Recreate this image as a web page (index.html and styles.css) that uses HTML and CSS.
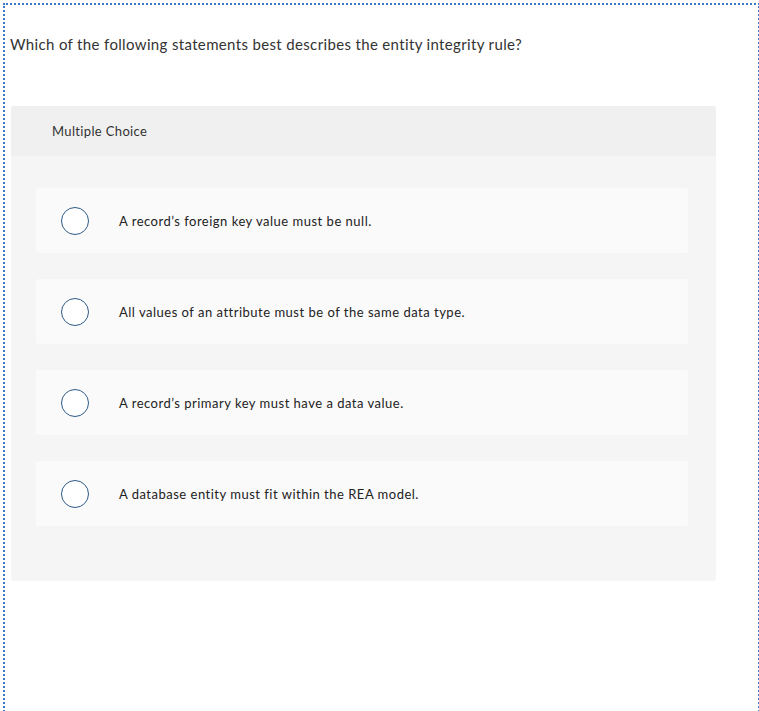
FILE: index.html
```html
<!DOCTYPE html>
<html>
<head>
<meta charset="utf-8">
<link rel="stylesheet" href="styles.css">
</head>
<body>
<div class="frame">
  <p class="question">Which of the following statements best describes the entity integrity rule?</p>
  <div class="card">
    <div class="card-head">Multiple Choice</div>
    <div class="card-body">
      <div class="option"><span class="radio"></span><span class="label">A record’s foreign key value must be null.</span></div>
      <div class="option"><span class="radio"></span><span class="label">All values of an attribute must be of the same data type.</span></div>
      <div class="option"><span class="radio"></span><span class="label">A record’s primary key must have a data value.</span></div>
      <div class="option"><span class="radio"></span><span class="label">A database entity must fit within the REA model.</span></div>
    </div>
  </div>
</div>
</body>
</html>
```
FILE: styles.css
```css
html, body {
  margin: 0;
  padding: 0;
  overflow: hidden;
  background: #fff;
}
body {
  font-family: Lato, "Open Sans", sans-serif;
  color: #333;
}
.frame {
  box-sizing: border-box;
  margin: 3px 0 0 3px;
  width: 757px;
  height: 740px;
  border: 2px dotted #3a78c9;
  border-bottom: none;
  padding: 0 0 0 5px;
}
.question {
  margin: 0;
  padding-top: 29px;
  font-size: 15px;
  line-height: 20px;
  letter-spacing: 0.35px;
  color: #333;
}
.card {
  margin: 52px 0 0 1px;
  width: 705px;
  border-radius: 3px;
  background: #f5f5f5;
  overflow: hidden;
}
.card-head {
  height: 50px;
  background: #f0f0f0;
  display: flex;
  align-items: center;
  padding-left: 41px;
  font-size: 13px;
  letter-spacing: 0.35px;
  color: #333;
}
.card-body {
  padding: 32px 28px 55px 25px;
  display: flex;
  flex-direction: column;
  gap: 26px;
}
.option {
  height: 65px;
  background: #fafafa;
  border-radius: 3px;
  display: flex;
  align-items: center;
  padding-left: 25px;
}
.radio {
  box-sizing: border-box;
  width: 28px;
  height: 28px;
  border: 1.5px solid #2e5a87;
  border-radius: 50%;
  background: #fff;
  flex: none;
}
.label {
  margin-left: 30px;
  font-size: 13px;
  letter-spacing: 0.5px;
  color: #222;
}
```
